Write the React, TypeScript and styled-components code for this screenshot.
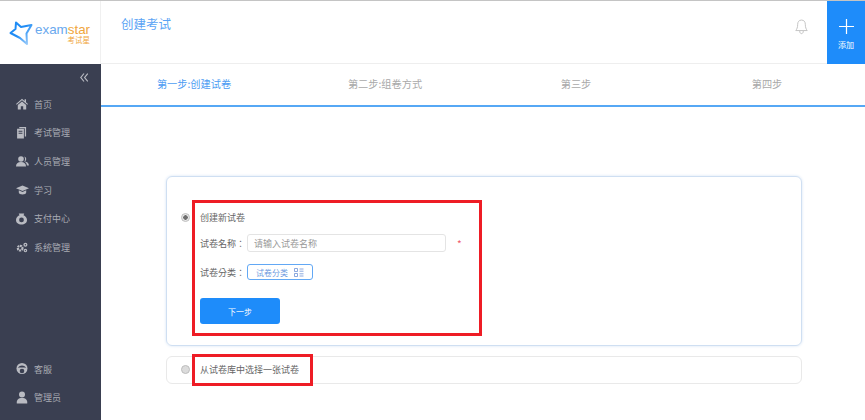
import React from 'react';
import styled, { createGlobalStyle } from 'styled-components';

const FONT = '"Noto Sans CJK SC", "Liberation Sans", sans-serif';

const GlobalStyle = createGlobalStyle`
  html, body {
    margin: 0;
    padding: 0;
    background: #fff;
    overflow: hidden;
  }
  * { box-sizing: border-box; }
`;

const menuTop = [
  { label: '首页', icon: 'home' },
  { label: '考试管理', icon: 'paper' },
  { label: '人员管理', icon: 'users' },
  { label: '学习', icon: 'cap' },
  { label: '支付中心', icon: 'pay' },
  { label: '系统管理', icon: 'cogs' },
];

const steps = ['第一步:创建试卷', '第二步:组卷方式', '第三步', '第四步'];

const MenuIcon = ({ name }: { name: string }) => {
  switch (name) {
    case 'home':
      return (
        <svg width="12" height="12" viewBox="0 0 12 12" fill="#b9bbc2">
          <path d="M6 .8 0 6l.7.8L6 2.3l5.3 4.5.7-.8-2-1.700V1.200H8.600v1.900z" />
          <path d="M6 3.400 1.800 7v4.400h3V8.200h2.400v3.200h3V7z" />
        </svg>
      );
    case 'paper':
      return (
        <svg width="11" height="12" viewBox="0 0 12 13" fill="#b9bbc2">
          <path d="M3.600 0H11v10.400H9.600V1.400H3.600z" />
          <path fillRule="evenodd" d="M1.200 1.800h7.400v10.700H1.200zM2.800 4v1h4.200V4zm0 2.200v1h4.200v-1z" />
        </svg>
      );
    case 'users':
      return (
        <svg width="13" height="11" viewBox="0 0 13 11" fill="#b9bbc2">
          <circle cx="5" cy="3" r="2.800" />
          <path d="M0 10.600c0-3 1.600-4.600 5-4.600s5 1.600 5 4.600z" />
          <path d="M8.300.6a2.600 2.600 0 0 1 .6 4.800c2.500.4 4 1.600 4 4h-2c-.3-1.700-1-3-2.500-3.800 1-1.500.9-3.500-.1-5z" />
        </svg>
      );
    case 'cap':
      return (
        <svg width="13" height="10" viewBox="0 0 13 10" fill="#b9bbc2">
          <path d="M6.500.5 0 3.300l6.500 2.800L13 3.300z" />
          <path d="M2.800 5.300v2.200c0 1 1.700 2 3.700 2s3.700-1 3.700-2V5.300L6.500 7z" />
        </svg>
      );
    case 'pay':
      return (
        <svg width="11" height="12" viewBox="0 0 12 13">
          <path fill="#b9bbc2" d="M3 .5h6l-.8 1.800C10.500 3.200 12 5.200 12 7.500c0 3-2.600 5-6 5s-6-2-6-5c0-2.300 1.500-4.300 3.800-5.200z" />
          <circle cx="6" cy="7.500" r="2.600" fill="#3a3f51" />
        </svg>
      );
    case 'cogs':
      return (
        <svg width="12" height="11" viewBox="0 0 13 11" fill="none" stroke="#b9bbc2">
          <circle cx="4.500" cy="6.200" r="2.500" strokeWidth="2.400" strokeDasharray="2 .6" />
          <circle cx="10.200" cy="2.500" r="1.500" strokeWidth="1.400" />
          <circle cx="10.200" cy="8.800" r="1.300" strokeWidth="1.300" />
        </svg>
      );
    case 'service':
      return (
        <svg width="12" height="12" viewBox="0 0 12 12">
          <circle cx="6" cy="5.500" r="5.500" fill="#b9bbc2" />
          <path d="M2 5c1-2 2.500-2.600 4-2.600S9 3 10 5C8.500 4.400 3.500 4.400 2 5z" fill="#3a3f51" />
          <circle cx="6" cy="8" r="2.300" fill="#3a3f51" />
        </svg>
      );
    default:
      return (
        <svg width="12" height="13" viewBox="0 0 12 13" fill="#b9bbc2">
          <circle cx="6" cy="3.400" r="3" />
          <path d="M.8 12.500c-.5-3.500 1.500-5.500 5.200-5.500s5.700 2 5.200 5.500z" />
        </svg>
      );
  }
};

export default function App() {
  return (
    <Page>
      <GlobalStyle />
      <LogoCell>
        <svg width="24" height="25" viewBox="0 0 24 25" fill="none">
          <defs>
            <linearGradient id="starStroke" x1="0" y1="0" x2="1" y2="1">
              <stop offset="0.45" stopColor="#1f8cf5" />
              <stop offset="1" stopColor="#b5d9fb" />
            </linearGradient>
          </defs>
          <path
            d="M7 1.500l5 4.500 10.500-2-5 8.500L18 23l-7-6-9.500-5 5-4z"
            stroke="url(#starStroke)"
            strokeWidth="2"
            strokeLinejoin="round"
          />
        </svg>
        <LogoWords>
          <LogoName>
            exam<LogoAccent>star</LogoAccent>
          </LogoName>
          <LogoSub>考试星</LogoSub>
        </LogoWords>
      </LogoCell>

      <TopBar>
        <PageTitle>创建考试</PageTitle>
        <BellWrap>
          <svg width="13" height="16" viewBox="0 0 14 18" fill="none" stroke="#bdbdbd" strokeWidth="1">
            <path d="M7 1.200c-2.800 0-4.300 2-4.300 4.800 0 3.500-.9 5.300-2.100 7h12.800c-1.200-1.700-2.100-3.500-2.100-7 0-2.800-1.500-4.800-4.300-4.800z" />
            <path d="M5 13.500c0 1.700.7 3 2 3s2-1.300 2-3" />
          </svg>
        </BellWrap>
        <AddButton>
          <svg width="15" height="15" viewBox="0 0 16 16" stroke="#fff" strokeWidth="1.300">
            <path d="M8 0v16M0 8h16" />
          </svg>
          <AddLabel>添加</AddLabel>
        </AddButton>
      </TopBar>

      <Sidebar>
        <Collapse>
          <svg width="8" height="9" viewBox="0 0 8 9" fill="none" stroke="#b9bbc2" strokeWidth="1.200">
            <path d="M4 .5 .8 4.500 4 8.500M7.800 .5 4.600 4.500l3.200 4" />
          </svg>
        </Collapse>
        <MenuList>
          {menuTop.map((m) => (
            <MenuItem key={m.label}>
              <IconBox>
                <MenuIcon name={m.icon} />
              </IconBox>
              {m.label}
            </MenuItem>
          ))}
        </MenuList>
        <MenuListBottom>
          <MenuItem>
            <IconBox>
              <MenuIcon name="service" />
            </IconBox>
            客服
          </MenuItem>
          <MenuItem>
            <IconBox>
              <MenuIcon name="admin" />
            </IconBox>
            管理员
          </MenuItem>
        </MenuListBottom>
      </Sidebar>

      <Main>
        <StepBar>
          {steps.map((s, i) => (
            <Step key={s} $active={i === 0}>
              {s}
            </Step>
          ))}
        </StepBar>
        <Content>
          <FormCard>
            <FormRadio $checked />
            <FormBody>
              <OptionTitle>创建新试卷</OptionTitle>
              <FieldRow>
                <FieldLabel>试卷名称：</FieldLabel>
                <NameInput placeholder="请输入试卷名称" />
                <Required>*</Required>
              </FieldRow>
              <CategoryRow>
                <FieldLabel>试卷分类：</FieldLabel>
                <CategoryButton>
                  试卷分类
                  <svg width="10" height="9" viewBox="0 0 10 9" fill="none" stroke="#6f93d6" strokeWidth="0.800">
                    <path d="M.5.500h3v3h-3zM.5 5.500h3v3h-3zM5.500 1h4M5.500 3.200h4M5.500 5.800h4M5.500 8h4" />
                  </svg>
                </CategoryButton>
              </CategoryRow>
              <NextButton>下一步</NextButton>
            </FormBody>
            <Highlight />
          </FormCard>
          <LibraryCard>
            <LibraryRadio />
            <OptionTitle>从试卷库中选择一张试卷</OptionTitle>
            <HighlightSmall />
          </LibraryCard>
        </Content>
      </Main>
    </Page>
  );
}

const Page = styled.div`
  width: 865px;
  height: 420px;
  display: grid;
  grid-template-columns: 101px 1fr;
  grid-template-rows: 63px 1fr;
  border-top: 1px solid #c4c4c4;
  font-family: ${FONT};
  background: #fff;
  overflow: hidden;
`;

const LogoCell = styled.div`
  display: flex;
  align-items: center;
  padding: 2px 0 0 9px;
  gap: 2px;
  background: #fff;
  border-right: 1px solid #f0f0f0;
`;

const LogoWords = styled.div`
  display: flex;
  flex-direction: column;
  align-items: flex-end;
`;

const LogoName = styled.div`
  font-family: "Liberation Sans", sans-serif;
  font-size: 13.400px;
  line-height: 12px;
  color: #6aa9ee;
`;

const LogoAccent = styled.span`
  color: #f0a63c;
`;

const LogoSub = styled.div`
  font-size: 7.500px;
  line-height: 8px;
  color: #f0a63c;
`;

const TopBar = styled.header`
  display: flex;
  align-items: stretch;
  border-bottom: 1px solid #eeeeee;
`;

const PageTitle = styled.h1`
  margin: 0;
  padding: 13px 0 0 20px;
  flex: 1;
  font-size: 12.500px;
  line-height: 20px;
  font-weight: 400;
  color: #5ba4f5;
`;

const BellWrap = styled.div`
  width: 50px;
  padding: 15px 0 0 18px;
`;

const AddButton = styled.div`
  width: 38px;
  height: 63px;
  display: flex;
  flex-direction: column;
  align-items: center;
  padding-top: 18px;
  background: #1e8cfa;
`;

const AddLabel = styled.span`
  margin-top: 5px;
  font-size: 8px;
  line-height: 12px;
  color: #fff;
`;

const Sidebar = styled.aside`
  display: flex;
  flex-direction: column;
  background: #3a3f51;
  padding-bottom: 8px;
`;

const Collapse = styled.div`
  height: 26px;
  padding: 9px 0 0 80px;
  line-height: 0;
`;

const MenuList = styled.nav`
  display: flex;
  flex-direction: column;
`;

const MenuListBottom = styled(MenuList)`
  margin-top: auto;
`;

const MenuItem = styled.div`
  height: 28.600px;
  display: flex;
  align-items: center;
  padding-left: 16px;
  font-size: 9px;
  color: #a9abb3;
`;

const IconBox = styled.span`
  width: 18px;
  display: flex;
  align-items: center;
`;

const Main = styled.main`
  display: flex;
  flex-direction: column;
  min-width: 0;
`;

const StepBar = styled.div`
  height: 43px;
  flex: none;
  display: grid;
  grid-template-columns: repeat(4, 1fr);
  border-bottom: 2px solid #56a8f5;
`;

const Step = styled.div<{ $active?: boolean }>`
  display: flex;
  align-items: center;
  justify-content: center;
  padding: 0 5px 2px 0;
  font-size: 10.200px;
  color: ${(p) => (p.$active ? '#4d9cf3' : '#a9a9a9')};
`;

const Content = styled.div`
  display: flex;
  flex-direction: column;
  gap: 10px;
  padding: 69px 63px 0 65px;
`;

const FormCard = styled.section`
  position: relative;
  height: 170px;
  display: flex;
  padding: 35px 0 0 14px;
  gap: 10px;
  border: 1px solid #cfdff2;
  border-radius: 6px;
  box-shadow: 0 0 3px #d5e3f4;
`;

const LibraryCard = styled.section`
  position: relative;
  height: 28px;
  display: flex;
  align-items: center;
  padding-left: 14px;
  gap: 10px;
  border: 1px solid #e9e9e9;
  border-radius: 6px;
`;

const Radio = styled.span<{ $checked?: boolean }>`
  width: 9px;
  height: 9px;
  flex: none;
  border-radius: 50%;
  border: 1px solid #bdbdbd;
  background: ${(p) => (p.$checked ? 'radial-gradient(circle, #6f6f6f 0 2px, #e8e8e8 2.500px)' : '#dcdcdc')};
`;

const FormRadio = styled(Radio)`
  margin-top: 1px;
`;

const LibraryRadio = styled(Radio)`
  margin-top: -2px;
`;

const FormBody = styled.div`
  display: flex;
  flex-direction: column;
`;

const OptionTitle = styled.div`
  font-size: 9px;
  line-height: 12px;
  color: #666;
`;

const FieldRow = styled.div`
  display: flex;
  align-items: center;
  margin-top: 10px;
  height: 18px;
`;

const CategoryRow = styled(FieldRow)`
  margin-top: 12px;
  height: 16px;
`;

const FieldLabel = styled.label`
  width: 47px;
  font-family: "Noto Sans CJK TC", "Noto Sans CJK SC", sans-serif;
  font-size: 9px;
  color: #666;
`;

const NameInput = styled.input`
  width: 199px;
  height: 18px;
  padding: 0 6px;
  border: 1px solid #e4e4e4;
  border-radius: 3px;
  outline: none;
  font-family: ${FONT};
  font-size: 9px;
  color: #666;
  &::placeholder {
    color: #999;
    opacity: 1;
  }
`;

const Required = styled.span`
  margin-left: 11px;
  font-size: 10px;
  color: #f05a6a;
`;

const CategoryButton = styled.div`
  width: 66px;
  height: 16px;
  display: flex;
  align-items: center;
  justify-content: center;
  gap: 6px;
  border: 1px solid #62a8f5;
  border-radius: 3px;
  font-size: 8px;
  color: #6f9be0;
`;

const NextButton = styled.button`
  width: 80px;
  height: 26px;
  margin-top: 18px;
  padding: 0;
  border: none;
  border-radius: 3px;
  background: #1e8cfa;
  font-family: ${FONT};
  font-size: 8px;
  color: #fff;
`;

const Highlight = styled.div`
  position: absolute;
  left: 25px;
  top: 23px;
  width: 290px;
  height: 136px;
  border: 3px solid #ee1c25;
  pointer-events: none;
`;

const HighlightSmall = styled.div`
  position: absolute;
  left: 25px;
  top: -3px;
  width: 121px;
  height: 32px;
  border: 3px solid #ee1c25;
  pointer-events: none;
`;
